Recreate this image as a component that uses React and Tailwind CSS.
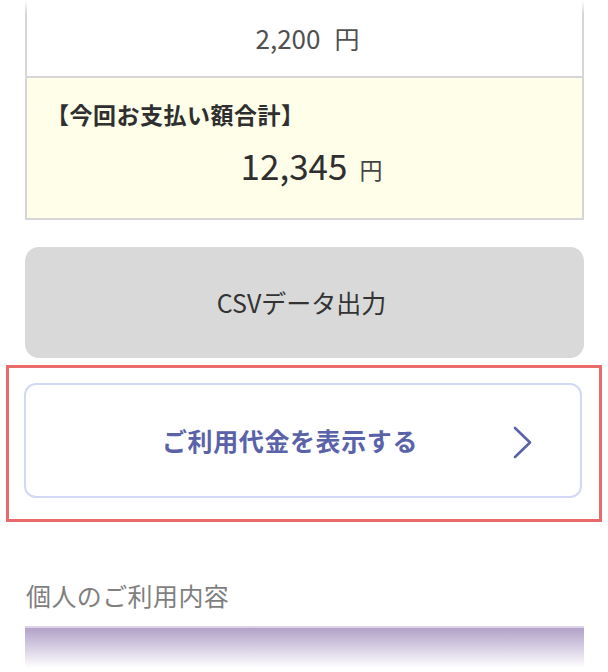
export default function App() {
  return (
    <div
      className="relative w-[608px] h-[672px] overflow-hidden bg-white"
      style={{ fontFamily: '"Noto Sans CJK JP", "Noto Sans", sans-serif' }}
    >
      {/* summary table */}
      <div className="ml-[25px] w-[559px] border-x-2 border-b-2 border-[#d6d6d6]">
        <div className="h-[76px] flex items-center justify-center text-[26px] leading-none text-[#505050] pl-[6px]">
          <span>2,200</span>
          <span className="ml-[14px] text-[25px]">円</span>
        </div>
        <div className="h-[142px] border-t-2 border-[#d6d6d6] bg-[#fefee9] pt-[21px]">
          <div className="pl-[19px] text-[23px] font-bold leading-[30px] text-[#2f2f2f] tracking-[0.5px]">
            【今回お支払い額合計】
          </div>
          <div className="mt-[16px] flex items-end justify-center pl-[14px] text-[#2f2f2f]">
            <span className="text-[35px] leading-[40px]">12,345</span>
            <span className="ml-[12px] mb-[2px] text-[23px] leading-[28px] text-[#444]">円</span>
          </div>
        </div>
      </div>

      {/* CSV button */}
      <div className="mt-[27px] ml-[25px] w-[559px] h-[111px] rounded-[14px] bg-[#d9d9d9] flex items-center justify-center text-[25px] text-[#333] pr-[6px]">
        CSVデータ出力
      </div>

      {/* highlighted button */}
      <div className="mt-[7px] ml-[6px] w-[596px] h-[157px] border-[3px] border-[#e86a6b] pt-[15px] pl-[15px]">
        <div className="relative w-[558px] h-[115px] rounded-[12px] border-2 border-[#d3d8f6] flex items-center justify-center pr-[26px]">
          <span className="text-[25px] font-bold tracking-[0.6px] text-[#5a62a9]">ご利用代金を表示する</span>
          <svg
            className="absolute right-[48px] top-[41px]"
            width="19"
            height="33"
            viewBox="0 0 19 33"
            fill="none"
          >
            <polyline
              points="2,2 17,16.5 2,31"
              stroke="#5a62a9"
              strokeWidth="2.6"
              strokeLinecap="round"
              strokeLinejoin="round"
            />
          </svg>
        </div>
      </div>

      {/* section heading */}
      <div className="mt-[58px] ml-[26px] text-[25px] leading-[30px] text-[#7f7f7f] tracking-[0.4px]">
        個人のご利用内容
      </div>
      <div className="mt-[16px] ml-[25px] w-[559px] h-[42px] border-t-2 border-[#dcd3e8] bg-gradient-to-b from-[#b2a2c8] to-white" />

      {/* top fade */}
      <div className="absolute left-0 top-0 w-full h-[14px] bg-gradient-to-b from-white to-transparent" />
    </div>
  );
}
